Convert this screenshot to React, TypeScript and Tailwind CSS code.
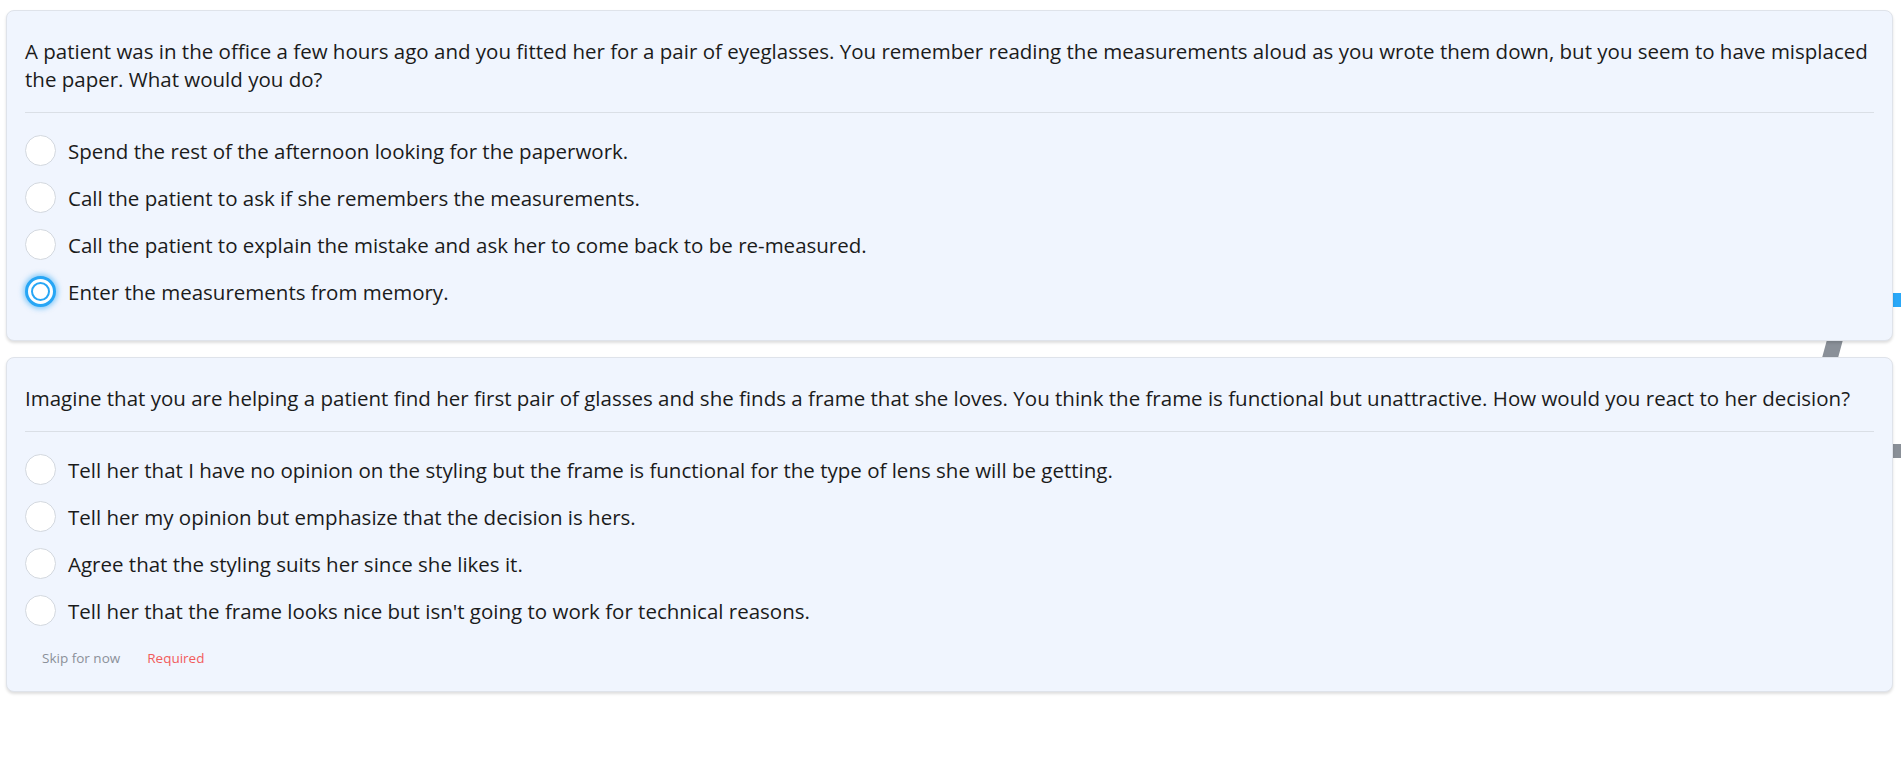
import React from "react";

type Q = { text: string; options: string[]; selected?: number; footer?: boolean };

const questions: Q[] = [
  {
    text:
      "A patient was in the office a few hours ago and you fitted her for a pair of eyeglasses. You remember reading the measurements aloud as you wrote them down, but you seem to have misplaced the paper. What would you do?",
    options: [
      "Spend the rest of the afternoon looking for the paperwork.",
      "Call the patient to ask if she remembers the measurements.",
      "Call the patient to explain the mistake and ask her to come back to be re-measured.",
      "Enter the measurements from memory.",
    ],
    selected: 3,
  },
  {
    text:
      "Imagine that you are helping a patient find her first pair of glasses and she finds a frame that she loves. You think the frame is functional but unattractive. How would you react to her decision?",
    options: [
      "Tell her that I have no opinion on the styling but the frame is functional for the type of lens she will be getting.",
      "Tell her my opinion but emphasize that the decision is hers.",
      "Agree that the styling suits her since she likes it.",
      "Tell her that the frame looks nice but isn't going to work for technical reasons.",
    ],
    footer: true,
  },
];

function Radio({ checked }: { checked: boolean }) {
  if (checked) {
    return (
      <div className="w-[31px] h-[31px] shrink-0 rounded-full border-[3px] border-[#27a6f5] bg-white shadow-[0_0_5px_2px_rgba(39,166,245,0.5)] flex items-center justify-center">
        <div className="w-[19px] h-[19px] rounded-full border-2 border-[#27a6f5] bg-white" />
      </div>
    );
  }
  return <div className="w-[31px] h-[31px] shrink-0 rounded-full border border-[#d3d8df] bg-white" />;
}

function Card({ q }: { q: Q }) {
  return (
    <div
      className={`relative z-10 rounded-[8px] border border-[#dfe3ea] bg-[#f0f5fe] shadow-[0_2px_3px_rgba(0,0,0,0.13)] px-[18px] pt-[26px] ${
        q.footer ? "pb-[23px]" : "pb-[33px]"
      }`}
    >
      <p className="text-[20.5px] leading-[28px] text-[#1b1b1b]">{q.text}</p>
      <div className="h-px bg-[#dadfe6] mt-[19px]" />
      <div className="mt-[22px] flex flex-col gap-[16px]">
        {q.options.map((o, i) => (
          <div key={i} className="flex items-center gap-[12px] h-[31px]">
            <Radio checked={q.selected === i} />
            <span className="text-[20.5px] leading-[28px] text-[#1b1b1b]">{o}</span>
          </div>
        ))}
      </div>
      {q.footer && (
        <div className="mt-[22px] flex items-center gap-[27px] pl-[17px] text-[13.5px] leading-[20px]">
          <span className="text-[#8b9099]">Skip for now</span>
          <span className="text-[#f25c5c]">Required</span>
        </div>
      )}
    </div>
  );
}

export default function App() {
  return (
    <div className="relative w-[1901px] h-[762px] overflow-hidden bg-white font-['Open_Sans',sans-serif]">
      <div className="absolute left-[1892px] top-[293px] w-[9px] h-[14px] bg-[#2aa8f8]" />
      <div className="absolute left-[1892px] top-[444px] w-[9px] h-[14px] bg-[#8a9098]" />
      <svg className="absolute left-[1820px] top-[336px]" width="26" height="22" viewBox="0 0 26 22">
        <polygon points="8,0 24,0 18,22 2,22" fill="#8a9098" />
      </svg>
      <div className="relative z-10 pt-[10px] pl-[6px] pr-[8px] flex flex-col gap-[16px]">
        {questions.map((q, i) => (
          <Card key={i} q={q} />
        ))}
      </div>
    </div>
  );
}
